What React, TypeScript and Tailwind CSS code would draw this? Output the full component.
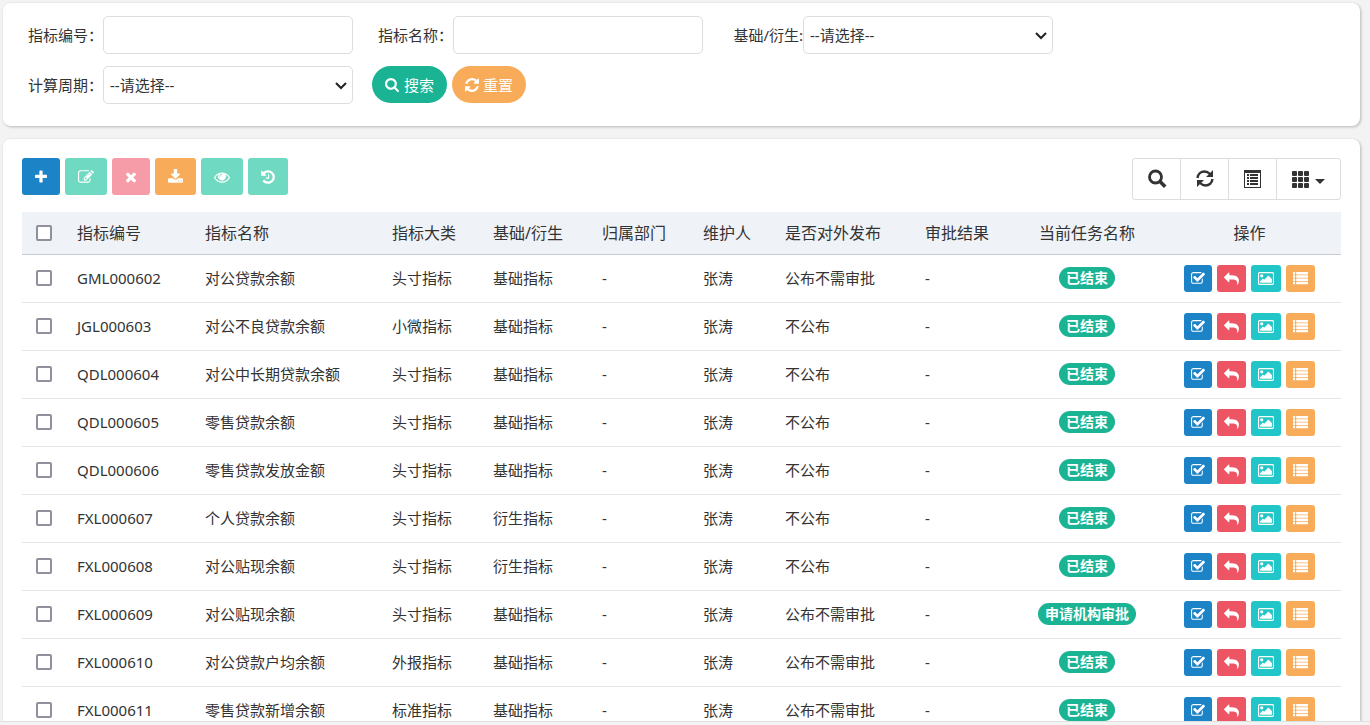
import { ReactNode, useState } from 'react';

const options = ['--请选择--', '基础指标', '衍生指标'];
const periods = ['--请选择--', '日', '月', '季', '年'];

const rows = [
  { code: 'GML000602', name: '对公贷款余额', category: '头寸指标', kind: '基础指标', publish: '公布不需审批', task: '已结束' },
  { code: 'JGL000603', name: '对公不良贷款余额', category: '小微指标', kind: '基础指标', publish: '不公布', task: '已结束' },
  { code: 'QDL000604', name: '对公中长期贷款余额', category: '头寸指标', kind: '基础指标', publish: '不公布', task: '已结束' },
  { code: 'QDL000605', name: '零售贷款余额', category: '头寸指标', kind: '基础指标', publish: '不公布', task: '已结束' },
  { code: 'QDL000606', name: '零售贷款发放金额', category: '头寸指标', kind: '基础指标', publish: '不公布', task: '已结束' },
  { code: 'FXL000607', name: '个人贷款余额', category: '头寸指标', kind: '衍生指标', publish: '不公布', task: '已结束' },
  { code: 'FXL000608', name: '对公贴现余额', category: '头寸指标', kind: '衍生指标', publish: '不公布', task: '已结束' },
  { code: 'FXL000609', name: '对公贴现余额', category: '头寸指标', kind: '基础指标', publish: '公布不需审批', task: '申请机构审批' },
  { code: 'FXL000610', name: '对公贷款户均余额', category: '外报指标', kind: '基础指标', publish: '公布不需审批', task: '已结束' },
  { code: 'FXL000611', name: '零售贷款新增余额', category: '标准指标', kind: '基础指标', publish: '公布不需审批', task: '已结束' }
];

const headers = ['指标编号', '指标名称', '指标大类', '基础/衍生', '归属部门', '维护人', '是否对外发布', '审批结果'];

const paths = {
  plus: 'M1600 736v192q0 40-28 68t-68 28h-416v416q0 40-28 68t-68 28h-192q-40 0-68-28t-28-68v-416h-416q-40 0-68-28t-28-68v-192q0-40 28-68t68-28h416v-416q0-40 28-68t68-28h192q40 0 68 28t28 68v416h416q40 0 68 28t28 68z',
  edit: 'M888 1184l116-116-152-152-116 116v56h96v96h56zm440-720q-16-16-33 1l-350 350q-17 17-1 33t33-1l350-350q17-17 1-33zm80 594v190q0 119-84.5 203.5t-203.5 84.5h-832q-119 0-203.5-84.5t-84.5-203.5v-832q0-119 84.5-203.5t203.5-84.5h832q63 0 117 25 15 7 18 23 3 17-9 29l-49 49q-14 14-32 8-23-6-45-6h-832q-66 0-113 47t-47 113v832q0 66 47 113t113 47h832q66 0 113-47t47-113v-126q0-13 9-22l64-64q15-15 35-7t20 29zm-96-738l288 288-672 672h-288v-288zm444 132l-92 92-288-288 92-92q28-28 68-28t68 28l152 152q28 28 28 68t-28 68z',
  times: 'M1490 1322q0 40-28 68l-136 136q-28 28-68 28t-68-28l-294-294-294 294q-28 28-68 28t-68-28l-136-136q-28-28-28-68t28-68l294-294-294-294q-28-28-28-68t28-68l136-136q28-28 68-28t68 28l294 294 294-294q28-28 68-28t68 28l136 136q28 28 28 68t-28 68l-294 294 294 294q28 28 28 68z',
  download: 'M1344 1344q0-26-19-45t-45-19-45 19-19 45 19 45 45 19 45-19 19-45zm256 0q0-26-19-45t-45-19-45 19-19 45 19 45 45 19 45-19 19-45zm128-224v320q0 40-28 68t-68 28h-1472q-40 0-68-28t-28-68v-320q0-40 28-68t68-28h465l135 136q58 56 136 56t136-56l136-136h464q40 0 68 28t28 68zm-325-569q17 41-14 70l-448 448q-18 19-45 19t-45-19l-448-448q-31-29-14-70 17-39 59-39h256v-448q0-26 19-45t45-19h256q26 0 45 19t19 45v448h256q42 0 59 39z',
  eye: 'M1664 960q-152-236-381-353 61 104 61 225 0 185-131.5 316.5t-316.5 131.5-316.5-131.5-131.5-316.5q0-121 61-225-229 117-381 353 133 205 333.5 326.5t434.5 121.5 434.5-121.5 333.5-326.5zm-720-384q0-20-14-34t-34-14q-125 0-214.5 89.5t-89.5 214.5q0 20 14 34t34 14 34-14 14-34q0-86 61-147t147-61q20 0 34-14t14-34zm848 384q0 34-20 69-140 230-376.5 368.5t-499.5 138.5-499.5-139-376.5-368q-20-35-20-69t20-69q140-229 376.5-368t499.5-139 499.5 139 376.5 368q20 35 20 69z',
  history: 'M1664 896q0 156-61 298t-164 245-245 164-298 61q-172 0-327-72.5t-264-204.5q-7-10-6.5-22.5t8.5-20.5l137-138q10-9 25-9 16 2 23 12 73 95 179 147t225 52q104 0 198.5-40.5t163.5-109.5 109.5-163.5 40.5-198.5-40.5-198.5-109.5-163.5-163.5-109.5-198.5-40.5q-98 0-188 35.5t-160 101.5l137 138q31 30 14 69-17 40-59 40h-448q-26 0-45-19t-19-45v-448q0-42 40-59 39-17 69 14l130 129q107-101 244.5-156.5t284.5-55.5q156 0 298 61t245 164 164 245 61 298zm-640-288v448q0 14-9 23t-23 9h-320q-14 0-23-9t-9-23v-64q0-14 9-23t23-9h224v-352q0-14 9-23t23-9h64q14 0 23 9t9 23z',
  search: 'M1216 832q0-185-131.5-316.5t-316.5-131.5-316.5 131.5-131.5 316.5 131.5 316.5 316.5 131.5 316.5-131.5 131.5-316.5zm512 832q0 52-38 90t-90 38q-54 0-90-38l-343-342q-179 124-399 124-143 0-273.5-55.5t-225-150-150-225-55.5-273.5 55.5-273.5 150-225 225-150 273.5-55.5 273.5 55.5 225 150 150 225 55.5 273.5q0 220-124 399l343 343q37 37 37 90z',
  refresh: 'M1639 1056q0 5-1 7-64 268-268 434.5t-478 166.5q-146 0-282.5-55t-243.5-157l-129 129q-19 19-45 19t-45-19-19-45v-448q0-26 19-45t45-19h448q26 0 45 19t19 45-19 45l-137 137q71 66 161 102t187 36q134 0 250-65t186-179q11-17 53-117 8-23 30-23h192q13 0 22.5 9.5t9.5 22.5zm25-800v448q0 26-19 45t-45 19h-448q-26 0-45-19t-19-45 19-45l138-138q-148-137-349-137-134 0-250 65t-186 179q-11 17-53 117-8 23-30 23h-199q-13 0-22.5-9.5t-9.5-22.5v-7q65-268 270-434.5t480-166.5q146 0 284 55.5t245 156.5l130-129q19-19 45-19t45 19 19 45z',
  check: 'M1472 930v318q0 119-84.5 203.5t-203.5 84.5h-832q-119 0-203.5-84.5t-84.5-203.5v-832q0-119 84.5-203.5t203.5-84.5h832q63 0 117 25 15 7 18 23 3 17-9 29l-49 49q-10 10-23 10-3 0-9-2-23-6-45-6h-832q-66 0-113 47t-47 113v832q0 66 47 113t113 47h832q66 0 113-47t47-113v-254q0-13 9-22l64-64q10-10 23-10 6 0 12 3 20 8 20 29zm231-489l-814 814q-24 24-57 24t-57-24l-430-430q-24-24-24-57t24-57l110-110q24-24 57-24t57 24l263 263 647-647q24-24 57-24t57 24l110 110q24 24 24 57t-24 57z',
  reply: 'M1792 1120q0 166-127 451-3 7-10.5 24t-13.5 30-13 22q-12 17-28 17-15 0-23.5-10t-8.5-25q0-9 2.500-26.500t2.500-23.500q5-68 5-123C1578 1080 1330 1024 864 1024H640v256q0 26-19 45t-45 19-45-19l-512-512q-19-19-19-45t19-45l512-512q19-19 45-19t45 19 19 45v256h224q713 0 875 403 53 134 53 333z',
  image: 'M576 576q0 80-56 136t-136 56-136-56-56-136 56-136 136-56 136 56 56 136zm1024 384v448h-1408v-192l320-320 160 160 512-512zm96-704h-1600q-13 0-22.5 9.5t-9.5 22.5v1216q0 13 9.5 22.5t22.5 9.5h1600q13 0 22.5-9.5t9.5-22.5v-1216q0-13-9.5-22.5t-22.5-9.5zm160 32v1216q0 66-47 113t-113 47h-1600q-66 0-113-47t-47-113v-1216q0-66 47-113t113-47h1600q66 0 113 47t47 113z',
  list: 'M0 128h256v288H0zM384 128h1408v288H384zM0 512h256v288H0zM384 512h1408v288H384zM0 896h256v288H0zM384 896h1408v288H384zM0 1280h256v288H0zM384 1280h1408v288H384z'
};

function Icon({ name, box = '0 0 1792 1792', className }: { name: keyof typeof paths; box?: string; className: string }) {
  return (
    <svg viewBox={box} fill="currentColor" aria-hidden="true" className={className}>
      <path d={paths[name]} />
    </svg>
  );
}

function Field({ id, label, children }: { id: string; label: string; children: ReactNode }) {
  return (
    <div className="flex items-center">
      <label htmlFor={id} className="w-[75px] whitespace-nowrap text-right">
        {label}
      </label>
      {children}
    </div>
  );
}

function Select({ id, items }: { id: string; items: string[] }) {
  return (
    <div className="relative">
      <select
        id={id}
        className="block h-[38px] w-[250px] appearance-none rounded-[5px] border border-[#dddddd] bg-white pl-1.5 pr-6 outline-none"
      >
        {items.map((t) => (
          <option key={t}>{t}</option>
        ))}
      </select>
      <svg
        viewBox="0 0 12 8"
        aria-hidden="true"
        className="pointer-events-none absolute right-1.5 top-4 h-2 w-3 fill-none stroke-[#222] stroke-2"
      >
        <path d="M1 1l5 5 5-5" />
      </svg>
    </div>
  );
}

const input = 'h-[38px] w-[250px] rounded-[5px] border border-[#dddddd] bg-white px-2 outline-none';
const toolButton = 'flex h-[37px] items-center rounded-[3px] px-[13px] text-white';
const rowButton = 'flex h-[27px] items-center rounded-[3px] px-[7px] text-white';
const gridButton = 'flex h-10 items-center justify-center text-[#333]';
const checkbox =
  'block size-4 appearance-none rounded-[2px] border-2 border-[#8f8f9d] bg-white checked:bg-[#1c84c6]';

function RowActions() {
  return (
    <div className="flex justify-center gap-[5px]">
      <button aria-label="审批" className={`${rowButton} bg-[#1c84c6]`}>
        <Icon name="check" box="64 0 1664 1792" className="h-[15px] w-3.5" />
      </button>
      <button aria-label="撤回" className={`${rowButton} bg-[#ed5565]`}>
        <Icon name="reply" className="size-[15px]" />
      </button>
      <button aria-label="流程图" className={`${rowButton} bg-[#23c6c8]`}>
        <Icon name="image" box="-64 0 1920 1792" className="h-[15px] w-4" />
      </button>
      <button aria-label="详情" className={`${rowButton} bg-[#f8ac59]`}>
        <Icon name="list" className="size-[15px]" />
      </button>
    </div>
  );
}

export default function App() {
  const [selected, setSelected] = useState<string[]>([]);

  const toggle = (code: string) => {
    setSelected((s) => (s.includes(code) ? s.filter((t) => t !== code) : [...s, code]));
  };

  return (
    <div className="flex h-screen flex-col overflow-hidden bg-[#f3f3f4] font-['Noto_Sans','Noto_Sans_CJK_SC',sans-serif] text-[15px] leading-5 text-[#333]">
      <div className="flex min-h-0 flex-1 flex-col gap-[13px] overflow-hidden pl-[3px] pr-[10px] pt-[3px]">
        <form
          onSubmit={(e) => e.preventDefault()}
          className="shrink-0 rounded-lg bg-white px-[25px] pb-[22px] pt-[13px] shadow-[1px_1px_3px_rgba(0,0,0,0.25)]"
        >
          <div className="flex flex-wrap gap-x-[25px] gap-y-3">
            <Field id="code" label="指标编号：">
              <input id="code" type="text" className={input} />
            </Field>
            <Field id="name" label="指标名称：">
              <input id="name" type="text" className={input} />
            </Field>
            <Field id="kind" label="基础/衍生:">
              <Select id="kind" items={options} />
            </Field>
          </div>
          <div className="mt-3 flex flex-wrap items-start gap-x-[19px]">
            <Field id="period" label="计算周期：">
              <Select id="period" items={periods} />
            </Field>
            <div className="flex gap-[5px]">
              <button type="submit" className="flex h-[37px] items-center gap-[5px] rounded-full bg-[#1ab394] px-[13px] text-white">
                <Icon name="search" box="64 128 1664 1664" className="size-3.5" />
                搜索
              </button>
              <button type="reset" className="flex h-[37px] items-center gap-1 rounded-full bg-[#f8ac59] px-[13px] text-white">
                <Icon name="refresh" box="128 128 1536 1536" className="size-3.5" />
                重置
              </button>
            </div>
          </div>
        </form>

        <div className="min-h-0 flex-1 overflow-hidden rounded-t-lg bg-white px-[19px] pt-[19px] shadow-[1px_1px_3px_rgba(0,0,0,0.25)]">
          <div className="flex items-start justify-between">
            <div className="flex gap-[5px]">
              <button aria-label="新增" className={`${toolButton} bg-[#1c84c6]`}>
                <Icon name="plus" box="192 0 1408 1792" className="h-4 w-3" />
              </button>
              <button aria-label="修改" className={`${toolButton} bg-[#6fd9c2]`}>
                <Icon name="edit" className="size-4" />
              </button>
              <button aria-label="删除" className={`${toolButton} bg-[#f59ca8]`}>
                <Icon name="times" box="192 0 1408 1792" className="h-4 w-3" />
              </button>
              <button aria-label="导出" className={`${toolButton} bg-[#f8ac59]`}>
                <Icon name="download" box="64 0 1664 1792" className="h-4 w-[15px]" />
              </button>
              <button aria-label="查看" className={`${toolButton} bg-[#6fd9c2]`}>
                <Icon name="eye" className="size-4" />
              </button>
              <button aria-label="历史" className={`${toolButton} bg-[#6fd9c2]`}>
                <Icon name="history" box="128 0 1536 1792" className="h-4 w-3.5" />
              </button>
            </div>

            <div className="flex divide-x divide-[#dddddd] rounded-[3px] border border-[#dddddd]">
              <button aria-label="搜索" className={`${gridButton} w-12`}>
                <svg viewBox="0 0 20 20" className="size-5 fill-none stroke-current">
                  <circle cx="8.5" cy="8" r="6" strokeWidth="2.8" />
                  <path d="M13 12.500l5.200 5.200" strokeWidth="3.600" />
                </svg>
              </button>
              <button aria-label="刷新" className={`${gridButton} w-12`}>
                <svg viewBox="0 0 20 20" className="size-5 fill-none stroke-current stroke-[2.4]">
                  <path d="M2.500 9C3 5 6 2.500 9.500 2.500c2.500 0 4 1 5.500 2.500M17.500 10C17 14 14 16.500 10.500 16.500c-2.500 0-4-1-5.500-2.500" />
                  <path d="M18 1v7h-7zM2 18v-7h7z" className="fill-current stroke-none" />
                </svg>
              </button>
              <button aria-label="详情视图" className={`${gridButton} w-12`}>
                <svg viewBox="0 0 17 18" className="h-[18px] w-[17px] fill-current">
                  <path fillRule="evenodd" d="M0 0h17v18H0zM1 3v14h15V3z" />
                  <path d="M3 4h2v2H3zM6 4h8v2H6zM3 7h2v2H3zM6 7h8v2H6zM3 10h2v2H3zM6 10h8v2H6zM3 13h2v2H3zM6 13h8v2H6z" />
                </svg>
              </button>
              <button aria-label="列" className={`${gridButton} w-[63px] gap-1.5`}>
                <svg viewBox="0 0 17 17" className="size-[17px] fill-current">
                  {[0, 6, 12].map((y) =>
                    [0, 6, 12].map((x) => <rect key={`${x}-${y}`} x={x} y={y} width="5" height="5" rx="1" />)
                  )}
                </svg>
                <svg viewBox="0 0 10 5" className="mt-1 h-[5px] w-2.5 fill-current">
                  <path d="M0 0h10L5 5z" />
                </svg>
              </button>
            </div>
          </div>

          <table className="mt-3 w-full table-fixed border-collapse text-left">
            <colgroup>
              <col className="w-[47px]" />
              <col className="w-[128px]" />
              <col className="w-[187px]" />
              <col className="w-[101px]" />
              <col className="w-[109px]" />
              <col className="w-[101px]" />
              <col className="w-[82px]" />
              <col className="w-[140px]" />
              <col className="w-[99px]" />
              <col className="w-[142px]" />
              <col className="w-[183px]" />
            </colgroup>
            <thead>
              <tr className="h-[42px] border-b border-[#c9cbd0] bg-[#eff2f7] text-base leading-5">
                <th className="pl-3.5">
                  <input
                    type="checkbox"
                    aria-label="全选"
                    className={checkbox}
                    checked={selected.length === rows.length}
                    onChange={(e) => setSelected(e.target.checked ? rows.map((t) => t.code) : [])}
                  />
                </th>
                {headers.map((t) => (
                  <th key={t} className="whitespace-nowrap px-2 font-normal">
                    {t}
                  </th>
                ))}
                <th className="text-center font-normal">当前任务名称</th>
                <th className="text-center font-normal">操作</th>
              </tr>
            </thead>
            <tbody>
              {rows.map((t) => (
                <tr key={t.code} className="h-12 whitespace-nowrap border-b border-[#e7e7e7]">
                  <td className="pl-3.5">
                    <input
                      type="checkbox"
                      aria-label={t.code}
                      className={checkbox}
                      checked={selected.includes(t.code)}
                      onChange={() => toggle(t.code)}
                    />
                  </td>
                  <td className="px-2">{t.code}</td>
                  <td className="px-2">{t.name}</td>
                  <td className="px-2">{t.category}</td>
                  <td className="px-2">{t.kind}</td>
                  <td className="px-2">-</td>
                  <td className="px-2">张涛</td>
                  <td className="px-2">{t.publish}</td>
                  <td className="px-2">-</td>
                  <td className="text-center">
                    <span className="inline-block rounded-full bg-[#1ab394] px-[7px] text-sm font-bold leading-[22px] text-white">
                      {t.task}
                    </span>
                  </td>
                  <td>
                    <RowActions />
                  </td>
                </tr>
              ))}
            </tbody>
          </table>
        </div>
      </div>
      <div className="h-1 shrink-0 border-t border-[#e0e0e0] bg-[#f3f3f4]" />
    </div>
  );
}
